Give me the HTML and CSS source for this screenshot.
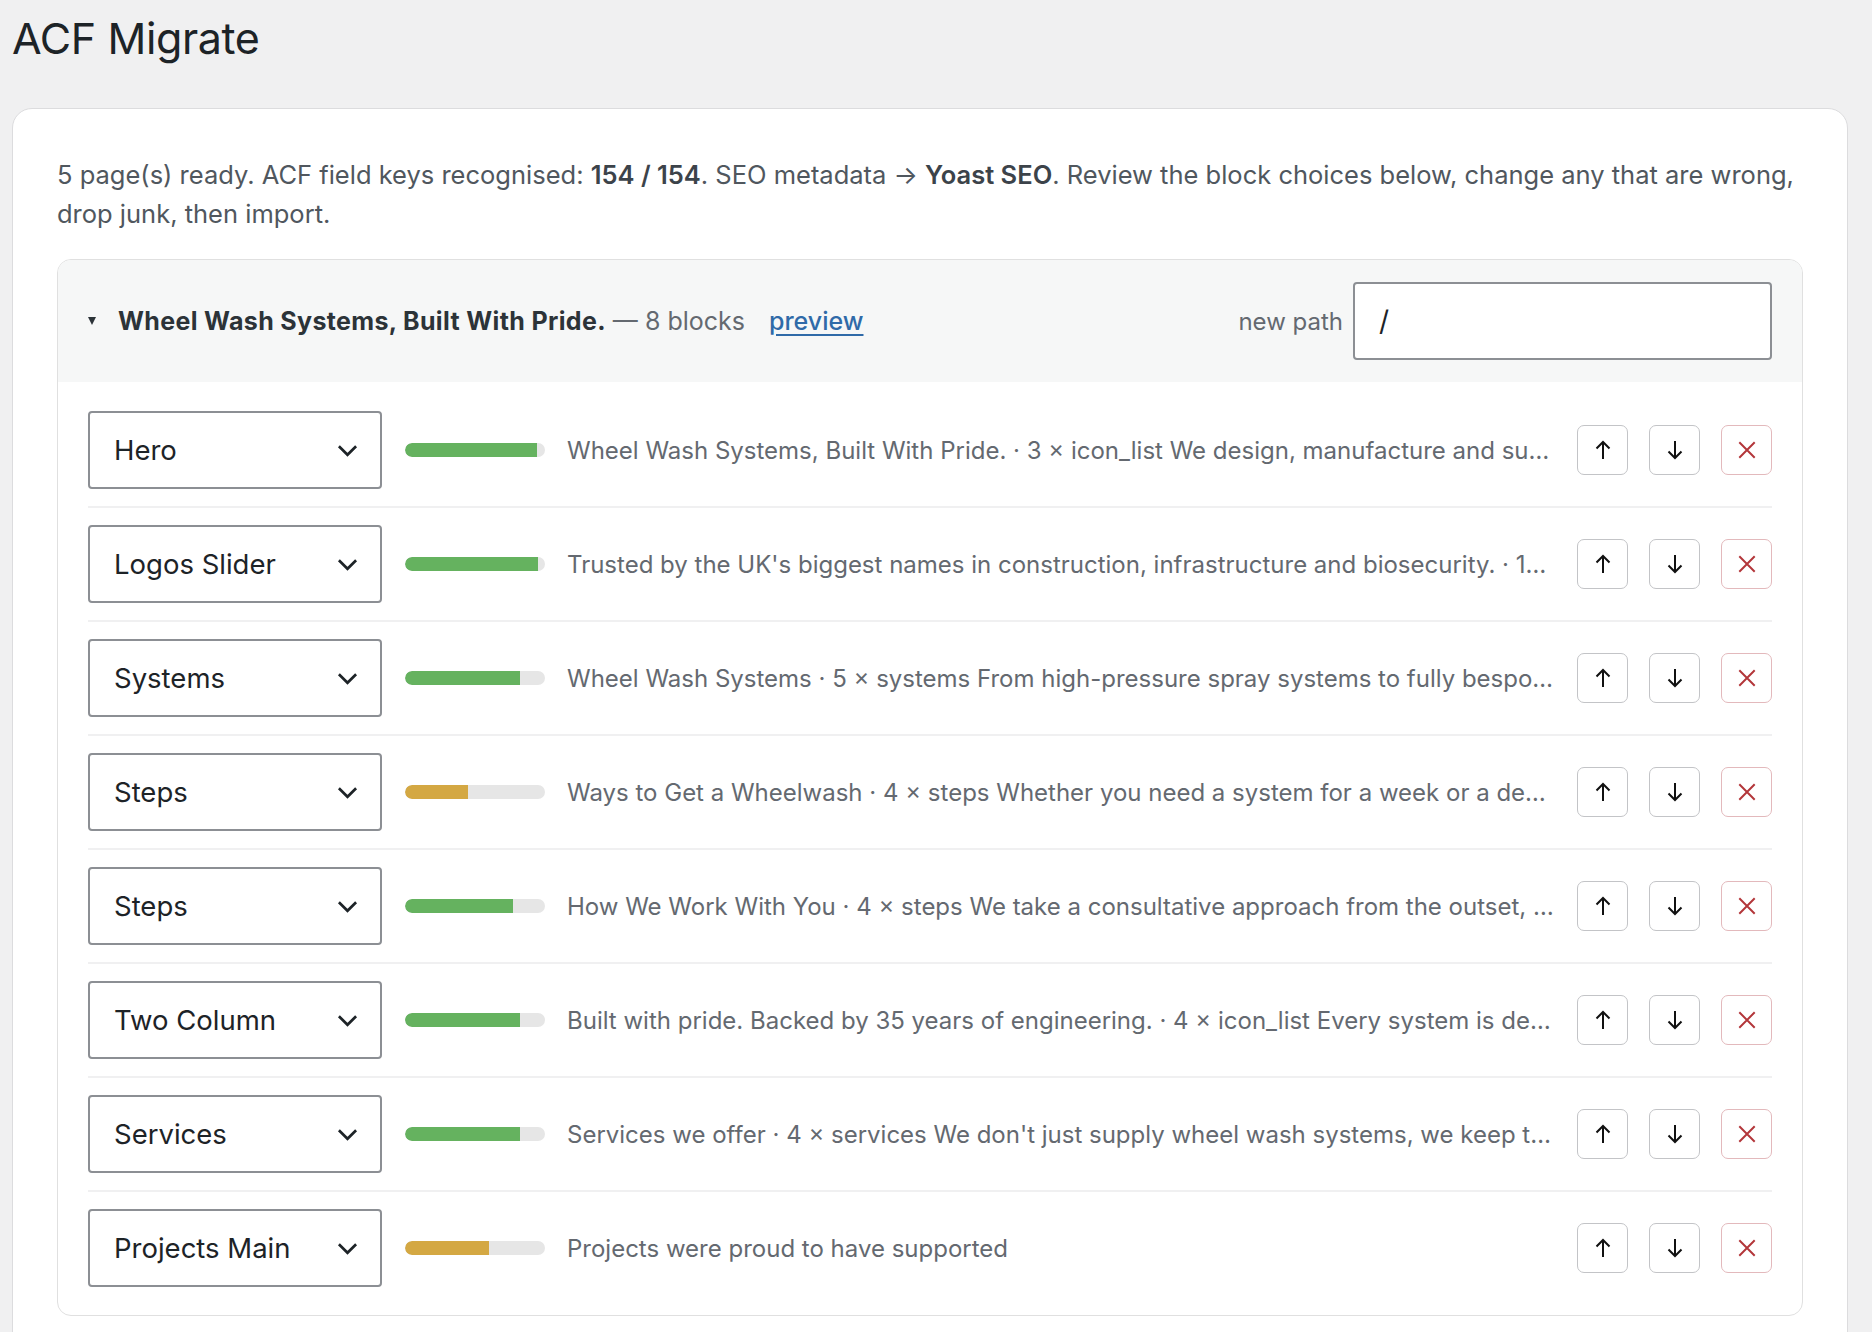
FILE: index.html
```html
<!DOCTYPE html>
<html lang="en">
<head>
<meta charset="utf-8">
<title>ACF Migrate</title>
<link rel="stylesheet" href="styles.css">
</head>
<body>
<div class="wrap">
  <h1 class="page-title">ACF Migrate</h1>
  <div class="card">
    <p class="summary">5 page(s) ready. ACF field keys recognised: <strong>154 / 154</strong>. SEO metadata → <strong>Yoast SEO</strong>. Review the block choices below, change any that are wrong, drop junk, then import.</p>

    <div class="page-group">
      <div class="group-head">
        <span class="caret"></span>
        <span class="g-title"><strong>Wheel Wash Systems, Built With Pride.</strong> — 8 blocks</span>
        <a class="preview-link" href="#">preview</a>
        <span class="spacer"></span>
        <label class="path-label">new path</label>
        <div class="path-input">/</div>
      </div>

      <div class="rows">
        <div class="row">
          <div class="select"><span>Hero</span><svg class="chev" viewBox="0 0 22 13"><path d="M2 2 L11 11 L20 2"/></svg></div>
          <div class="bar"><div class="fill good" style="width:94%"></div></div>
          <div class="preview">Wheel Wash Systems, Built With Pride. · 3 × icon_list We design, manufacture and supply wheel wash systems for every site</div>
          <div class="actions">
            <button class="btn"><svg viewBox="0 0 20 22"><path d="M10 20V3M3.5 9.5L10 3l6.5 6.5"/></svg></button>
            <button class="btn"><svg viewBox="0 0 20 22"><path d="M10 2v17M3.5 12.5L10 19l6.5-6.5"/></svg></button>
            <button class="btn del"><svg viewBox="0 0 20 20"><path d="M3 3L17 17M17 3L3 17"/></svg></button>
          </div>
        </div>

        <div class="row">
          <div class="select"><span>Logos Slider</span><svg class="chev" viewBox="0 0 22 13"><path d="M2 2 L11 11 L20 2"/></svg></div>
          <div class="bar"><div class="fill good" style="width:95%"></div></div>
          <div class="preview">Trusted by the UK's biggest names in construction, infrastructure and biosecurity. · 17 × logos</div>
          <div class="actions">
            <button class="btn"><svg viewBox="0 0 20 22"><path d="M10 20V3M3.5 9.5L10 3l6.5 6.5"/></svg></button>
            <button class="btn"><svg viewBox="0 0 20 22"><path d="M10 2v17M3.5 12.5L10 19l6.5-6.5"/></svg></button>
            <button class="btn del"><svg viewBox="0 0 20 20"><path d="M3 3L17 17M17 3L3 17"/></svg></button>
          </div>
        </div>

        <div class="row">
          <div class="select"><span>Systems</span><svg class="chev" viewBox="0 0 22 13"><path d="M2 2 L11 11 L20 2"/></svg></div>
          <div class="bar"><div class="fill good" style="width:82%"></div></div>
          <div class="preview">Wheel Wash Systems · 5 × systems From high-pressure spray systems to fully bespoke installations</div>
          <div class="actions">
            <button class="btn"><svg viewBox="0 0 20 22"><path d="M10 20V3M3.5 9.5L10 3l6.5 6.5"/></svg></button>
            <button class="btn"><svg viewBox="0 0 20 22"><path d="M10 2v17M3.5 12.5L10 19l6.5-6.5"/></svg></button>
            <button class="btn del"><svg viewBox="0 0 20 20"><path d="M3 3L17 17M17 3L3 17"/></svg></button>
          </div>
        </div>

        <div class="row">
          <div class="select"><span>Steps</span><svg class="chev" viewBox="0 0 22 13"><path d="M2 2 L11 11 L20 2"/></svg></div>
          <div class="bar"><div class="fill warn" style="width:45%"></div></div>
          <div class="preview">Ways to Get a Wheelwash · 4 × steps Whether you need a system for a week or a decade, we have an option</div>
          <div class="actions">
            <button class="btn"><svg viewBox="0 0 20 22"><path d="M10 20V3M3.5 9.5L10 3l6.5 6.5"/></svg></button>
            <button class="btn"><svg viewBox="0 0 20 22"><path d="M10 2v17M3.5 12.5L10 19l6.5-6.5"/></svg></button>
            <button class="btn del"><svg viewBox="0 0 20 20"><path d="M3 3L17 17M17 3L3 17"/></svg></button>
          </div>
        </div>

        <div class="row">
          <div class="select"><span>Steps</span><svg class="chev" viewBox="0 0 22 13"><path d="M2 2 L11 11 L20 2"/></svg></div>
          <div class="bar"><div class="fill good" style="width:77%"></div></div>
          <div class="preview">How We Work With You · 4 × steps We take a consultative approach from the outset, so every system fits</div>
          <div class="actions">
            <button class="btn"><svg viewBox="0 0 20 22"><path d="M10 20V3M3.5 9.5L10 3l6.5 6.5"/></svg></button>
            <button class="btn"><svg viewBox="0 0 20 22"><path d="M10 2v17M3.5 12.5L10 19l6.5-6.5"/></svg></button>
            <button class="btn del"><svg viewBox="0 0 20 20"><path d="M3 3L17 17M17 3L3 17"/></svg></button>
          </div>
        </div>

        <div class="row">
          <div class="select"><span>Two Column</span><svg class="chev" viewBox="0 0 22 13"><path d="M2 2 L11 11 L20 2"/></svg></div>
          <div class="bar"><div class="fill good" style="width:82%"></div></div>
          <div class="preview">Built with pride. Backed by 35 years of engineering. · 4 × icon_list Every system is designed and built in the UK</div>
          <div class="actions">
            <button class="btn"><svg viewBox="0 0 20 22"><path d="M10 20V3M3.5 9.5L10 3l6.5 6.5"/></svg></button>
            <button class="btn"><svg viewBox="0 0 20 22"><path d="M10 2v17M3.5 12.5L10 19l6.5-6.5"/></svg></button>
            <button class="btn del"><svg viewBox="0 0 20 20"><path d="M3 3L17 17M17 3L3 17"/></svg></button>
          </div>
        </div>

        <div class="row">
          <div class="select"><span>Services</span><svg class="chev" viewBox="0 0 22 13"><path d="M2 2 L11 11 L20 2"/></svg></div>
          <div class="bar"><div class="fill good" style="width:82%"></div></div>
          <div class="preview">Services we offer · 4 × services We don't just supply wheel wash systems, we keep them running</div>
          <div class="actions">
            <button class="btn"><svg viewBox="0 0 20 22"><path d="M10 20V3M3.5 9.5L10 3l6.5 6.5"/></svg></button>
            <button class="btn"><svg viewBox="0 0 20 22"><path d="M10 2v17M3.5 12.5L10 19l6.5-6.5"/></svg></button>
            <button class="btn del"><svg viewBox="0 0 20 20"><path d="M3 3L17 17M17 3L3 17"/></svg></button>
          </div>
        </div>

        <div class="row">
          <div class="select"><span>Projects Main</span><svg class="chev" viewBox="0 0 22 13"><path d="M2 2 L11 11 L20 2"/></svg></div>
          <div class="bar"><div class="fill warn" style="width:60%"></div></div>
          <div class="preview">Projects were proud to have supported</div>
          <div class="actions">
            <button class="btn"><svg viewBox="0 0 20 22"><path d="M10 20V3M3.5 9.5L10 3l6.5 6.5"/></svg></button>
            <button class="btn"><svg viewBox="0 0 20 22"><path d="M10 2v17M3.5 12.5L10 19l6.5-6.5"/></svg></button>
            <button class="btn del"><svg viewBox="0 0 20 20"><path d="M3 3L17 17M17 3L3 17"/></svg></button>
          </div>
        </div>
      </div>
    </div>
  </div>
</div>
</body>
</html>
```
FILE: styles.css
```css
* { box-sizing: border-box; }
html, body {
  margin: 0;
  background: #f0f0f1;
  font-family: Inter, "Noto Sans", "Liberation Sans", sans-serif;
  color: #1d2327;
}
.wrap {
  padding: 12px 24px 0 12px;
}
.page-title {
  margin: 0 0 44px 0;
  font-size: 43px;
  line-height: 52px;
  font-weight: 400;
  color: #1d2327;
  letter-spacing: -0.4px;
}
.card {
  background: #fff;
  border: 1px solid #dcdcde;
  border-radius: 20px;
  padding: 46px 44px 40px;
  min-height: 1300px;
}
.summary {
  margin: 0 0 26px 0;
  font-size: 25.5px;
  line-height: 39px;
  color: #50575e;
}
.summary strong { font-weight: 600; color: #3c434a; }

.page-group {
  border: 1px solid #e0e0e0;
  border-radius: 14px;
  overflow: hidden;
}
.group-head {
  display: flex;
  align-items: center;
  background: #f6f7f7;
  padding: 22px 30px;
}
.caret {
  width: 0;
  height: 0;
  border-left: 4.5px solid transparent;
  border-right: 4.5px solid transparent;
  border-top: 8px solid #2c3338;
  margin-right: 22px;
}
.g-title {
  font-size: 25px;
  color: #646970;
}
.g-title strong { font-weight: 700; color: #2c3338; letter-spacing: 0.35px; }
.preview-link {
  margin-left: 24px;
  font-size: 25px;
  color: #2f6aa8;
  text-decoration: underline;
  text-underline-offset: 4px;
  font-weight: 500;
}
.spacer { flex: 1; }
.path-label {
  font-size: 24px;
  color: #646970;
  margin-right: 10px;
}
.path-input {
  width: 419px;
  height: 78px;
  border: 2px solid #8c8f94;
  border-radius: 4px;
  background: #fff;
  font-size: 28px;
  display: flex;
  align-items: center;
  padding-left: 24px;
  color: #1d2327;
}

.rows {
  padding: 12px 30px 11px;
}
.row {
  display: flex;
  align-items: center;
  padding: 17px 0;
  border-bottom: 2px solid #f0f0f1;
}
.row:last-child { border-bottom: none; }
.select {
  flex: 0 0 294px;
  height: 78px;
  border: 2px solid #8c8f94;
  border-radius: 4px;
  display: flex;
  align-items: center;
  justify-content: space-between;
  padding: 0 22px 0 24px;
  font-size: 27.5px;
  color: #1d2327;
  background: #fff;
}
.chev {
  width: 21px;
  height: 13px;
  fill: none;
  stroke: #1d2327;
  stroke-width: 2.8;
}
.bar {
  flex: 0 0 140px;
  height: 14px;
  margin-left: 23px;
  border-radius: 7px;
  background: #e6e6e6;
  overflow: hidden;
}
.fill { height: 100%; border-radius: 7px 0 0 7px; }
.fill.good { background: #65b25f; }
.fill.warn { background: #d4a843; }
.preview {
  flex: 1;
  min-width: 0;
  margin: 0 22px;
  font-size: 24px;
  color: #646970;
  white-space: nowrap;
  overflow: hidden;
  text-overflow: ellipsis;
}
.actions {
  display: flex;
  gap: 21px;
}
.btn {
  width: 51px;
  height: 50px;
  border: 1.5px solid #c3c4c7;
  border-radius: 7px;
  background: #fff;
  display: flex;
  align-items: center;
  justify-content: center;
  padding: 0;
}
.btn svg {
  width: 20px;
  height: 22px;
  fill: none;
  stroke: #111;
  stroke-width: 2;
}
.btn.del { border-color: #e3b9bc; }
.btn.del svg {
  width: 22px;
  height: 22px;
  stroke: #b3363a;
  stroke-width: 1.8;
}
```
